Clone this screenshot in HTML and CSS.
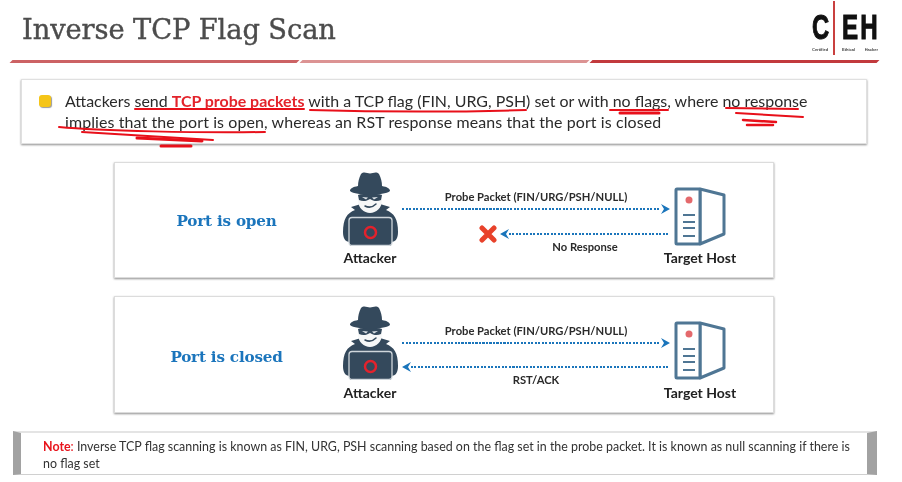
FILE: index.html
```html
<!DOCTYPE html>
<html lang="en">
<head>
<meta charset="utf-8">
<title>Inverse TCP Flag Scan</title>
<link rel="stylesheet" href="styles.css">
</head>
<body>
<svg width="0" height="0" class="defs" aria-hidden="true">
  <symbol id="attacker" viewBox="0 0 55 74">
    <path fill="#34495c" d="M0 60C0 47 4 41 12 38L8 35L18 32H37L47 35L43 38C51 41 55 47 55 60C55 66 53 70 48 70V74H7V70C2 70 0 66 0 60Z"/>
    <path fill="#f6f7f7" d="M15 20H39V28C39 36 33 41 27 41C21 41 15 36 15 28Z"/>
    <path fill="#34495c" d="M15 23C21 21 33 21 39 23L38 28C34 30 30 29 27 27C24 29 20 30 16 28Z"/>
    <path fill="#dfe4e8" d="M19 25L25 25.500L23 27.500ZM35 25L29 25.500L31 27.500Z"/>
    <path fill="none" stroke="#34495c" stroke-width="1.500" stroke-linecap="round" d="M22 34C26 36 30 35 33 32"/>
    <path fill="#34495c" d="M18 2C21 -1 24 1.500 27 1.500C30 1.500 33 -1 36 2C38 6 39 10 39 14C44 15 47 16.500 47 19C41 24 13 24 7 19C7 16.500 10 15 15 14C15 10 16 6 18 2Z"/>
    <rect x="6" y="45.500" width="43" height="28" rx="3" fill="#34495c" stroke="#cfd6db" stroke-width="1.300"/>
    <circle cx="27.500" cy="60.500" r="5.500" fill="none" stroke="#e3222c" stroke-width="2.500"/>
  </symbol>
  <symbol id="host" viewBox="0 0 52 59">
    <path fill="#fff" stroke="#4f7694" stroke-width="3" stroke-linejoin="round" d="M26 2L50 8V47L26 57Z"/>
    <rect x="2" y="2" width="24" height="55" rx="1" fill="#fff" stroke="#4f7694" stroke-width="3"/>
    <circle cx="15" cy="13" r="3.500" fill="#e4696c"/>
    <path stroke="#4f7694" stroke-width="2" d="M9 28H21M9 35H21M9 41H21M9 49H21"/>
  </symbol>
  <symbol id="head-right" viewBox="0 0 9 10">
    <path fill="#1a75bb" d="M0 0L9 5L0 10L3 5Z"/>
  </symbol>
  <symbol id="head-left" viewBox="0 0 9 10">
    <path fill="#1a75bb" d="M9 0L0 5L9 10L6 5Z"/>
  </symbol>
</svg>

<header class="header">
  <h1 class="title">Inverse TCP Flag Scan</h1>
  <div class="logo">
    <span class="logo-c">C</span>
    <span class="logo-eh">EH</span>
    <span class="logo-sub logo-sub-left">Certified</span>
    <span class="logo-sub logo-sub-right"><span>Ethical</span><span>Hacker</span></span>
  </div>
</header>
<div class="rule">
  <span class="rule-seg rule-a"></span>
  <span class="rule-seg rule-b"></span>
  <span class="rule-seg rule-c"></span>
</div>

<section class="callout">
  <span class="bullet"></span>
  <p class="callout-text">Attackers send <strong class="hot">TCP probe packets</strong> with a TCP flag (FIN, URG, PSH) set or with no flags, where no response<br><span class="callout-line-two">implies that the port is open, whereas an RST response means that the port is closed</span></p>
</section>

<section class="panel">
  <h2 class="panel-title">Port is open</h2>
  <div class="actor actor-attacker">
    <svg class="attacker-icon"><use href="#attacker"/></svg>
    <span class="actor-name">Attacker</span>
  </div>
  <div class="flow">
    <span class="flow-label">Probe Packet (FIN/URG/PSH/NULL)</span>
    <div class="arrow">
      <span class="dots"></span>
      <svg class="head"><use href="#head-right"/></svg>
    </div>
    <div class="arrow arrow-back arrow-blocked">
      <svg class="cross" viewBox="0 0 18 18"><path stroke="#e8412a" stroke-width="5" stroke-linecap="round" d="M3 3L15 15M15 3L3 15"/></svg>
      <svg class="head"><use href="#head-left"/></svg>
      <span class="dots"></span>
    </div>
    <span class="flow-label flow-label-low flow-label-shift">No Response</span>
  </div>
  <div class="actor actor-host">
    <svg class="host-icon"><use href="#host"/></svg>
    <span class="actor-name">Target Host</span>
  </div>
</section>

<section class="panel panel-tall">
  <h2 class="panel-title">Port is closed</h2>
  <div class="actor actor-attacker">
    <svg class="attacker-icon"><use href="#attacker"/></svg>
    <span class="actor-name">Attacker</span>
  </div>
  <div class="flow">
    <span class="flow-label">Probe Packet (FIN/URG/PSH/NULL)</span>
    <div class="arrow">
      <span class="dots"></span>
      <svg class="head"><use href="#head-right"/></svg>
    </div>
    <div class="arrow arrow-back">
      <svg class="head"><use href="#head-left"/></svg>
      <span class="dots"></span>
    </div>
    <span class="flow-label flow-label-low">RST/ACK</span>
  </div>
  <div class="actor actor-host">
    <svg class="host-icon"><use href="#host"/></svg>
    <span class="actor-name">Target Host</span>
  </div>
</section>

<section class="note">
  <p class="note-text"><strong class="note-key">Note</strong><span class="note-colon">:</span> Inverse TCP flag scanning is known as FIN, URG, PSH scanning based on the flag set in the probe packet. It is known as null scanning if there is<br>no flag set</p>
</section>

<svg class="scribble" viewBox="0 0 902 482" aria-hidden="true">
  <g fill="none" stroke="#e8101a" stroke-linecap="round">
    <path stroke-width="2" d="M135 109H304M310 110C380 112 460 112 526 110M610 110H668"/>
    <path stroke-width="3" d="M620 113H659"/>
    <path stroke-width="2" d="M726 108L798 109M736 113L803 117"/>
    <path stroke-width="2.500" d="M743 120L776 122M747 125H773"/>
    <path stroke-width="2" d="M59 127C100 131 200 133 265 132M82 132L213 140"/>
    <path stroke-width="3" d="M137 138L202 141M161 146H191"/>
  </g>
</svg>
</body>
</html>
```
FILE: styles.css
```css
html, body {
  margin: 0;
  padding: 0;
}
body {
  position: relative;
  width: 902px;
  height: 482px;
  overflow: hidden;
  background: #fff;
  color: #222;
  font-family: "Lato", "Open Sans", sans-serif;
  filter: blur(0.45px);
}
.defs {
  display: block;
  height: 0;
}
.header {
  display: flex;
  justify-content: space-between;
  align-items: flex-start;
  height: 60px;
  padding: 0 25px 0 22px;
  box-sizing: border-box;
}
.title {
  margin: 13px 0 0;
  font-family: "DejaVu Serif", serif;
  font-weight: 400;
  font-size: 27.300px;
  line-height: 34px;
  letter-spacing: -0.1px;
  -webkit-text-stroke: 0.4px #4c4c4c;
  color: #4c4c4c;
}
.logo {
  display: grid;
  grid-template-columns: 21px 34px;
  grid-template-rows: 38px 8px;
  margin: 8px 0 0 0;
  width: 65px;
  position: relative;
  font-family: "Liberation Sans", sans-serif;
  color: #111;
}
.logo::before {
  content: "";
  position: absolute;
  left: 21px;
  top: -7px;
  width: 2px;
  height: 54px;
  background: #c9403f;
}
.logo-c, .logo-eh {
  font-weight: 700;
  font-size: 35px;
  line-height: 38px;
  transform-origin: left center;
  -webkit-text-stroke: 1px #111;
}
.logo-c {
  transform: scaleX(0.68);
  width: 21px;
}
.logo-eh {
  transform: scaleX(0.69);
  letter-spacing: 3px;
  margin-left: 9px;
  width: 50px;
  white-space: nowrap;
}
.logo-sub {
  font-size: 4px;
  line-height: 8px;
  font-weight: 700;
  color: #444;
  white-space: nowrap;
}
.logo-sub-right {
  display: flex;
  justify-content: space-between;
  margin-left: 9px;
  width: 36px;
}
.rule {
  display: flex;
  gap: 3px;
  height: 3px;
  margin: 0 24px 0 11px;
}
.rule-seg {
  flex: 1;
  transform: skewX(-45deg);
}
.rule-a {
  background: #cc6264;
}
.rule-b {
  background: #dc9393;
}
.rule-c {
  background: #c23a3d;
}
.callout {
  display: flex;
  gap: 14px;
  box-sizing: border-box;
  width: 846px;
  height: 65px;
  margin: 16px 0 0 21px;
  padding: 10px 10px 0 17px;
  border: 1px solid #e0e0e0;
  box-shadow: 0 1px 2px #8f8f8f;
}
.bullet {
  flex: none;
  width: 12px;
  height: 12px;
  margin-top: 5px;
  border-radius: 3px;
  background: #f5c518;
  box-shadow: 1px 1px 1px #9a9a9a;
}
.callout-text {
  margin: 0;
  font-size: 15.940px;
  line-height: 21px;
  white-space: nowrap;
  color: #2a2a2a;
}
.callout-line-two {
  letter-spacing: 0.11px;
}
.hot {
  color: #e3232b;
  font-weight: 700;
}
.panel {
  display: grid;
  grid-template-columns: 223px 64px 268px 60px;
  box-sizing: border-box;
  width: 660px;
  height: 116px;
  margin: 18px 0 0 114px;
  border: 1px solid #dcdcdc;
  box-shadow: 0 1px 2px #8f8f8f;
}
.panel-tall {
  height: 117px;
}
.panel-title {
  margin: 0;
  padding-top: 48px;
  text-align: center;
  font-family: "DejaVu Serif", serif;
  font-weight: 700;
  font-size: 15.200px;
  line-height: 20px;
  letter-spacing: -0.2px;
  color: #1b75bc;
}
.panel-tall .panel-title {
  padding-top: 50px;
}
.actor {
  display: flex;
  flex-direction: column;
  align-items: center;
}
.actor-attacker {
  padding-top: 9px;
}
.actor-host {
  padding-top: 24px;
}
.attacker-icon {
  flex: none;
  width: 55px;
  height: 74px;
}
.host-icon {
  flex: none;
  width: 52px;
  height: 59px;
}
.actor-name {
  margin-top: 2px;
  font-size: 14px;
  font-weight: 700;
  line-height: 20px;
  white-space: nowrap;
  color: #222;
}
.panel-tall .actor-name {
  margin-top: 3px;
}
.flow {
  display: flex;
  flex-direction: column;
  padding-top: 26px;
}
.flow-label {
  text-align: center;
  font-size: 11.200px;
  font-weight: 700;
  line-height: 16px;
  white-space: nowrap;
  color: #2a2a2a;
}
.flow-label-low {
  margin-top: 1px;
}
.flow-label-shift {
  padding-left: 98px;
}
.arrow {
  display: flex;
  align-items: center;
  height: 8px;
}
.arrow-back {
  margin-top: 17px;
}
.panel-tall .arrow-back {
  margin-top: 16px;
}
.arrow-blocked {
  padding-left: 77px;
}
.dots {
  flex: 1;
  height: 2px;
  background: repeating-linear-gradient(90deg, #1a75bb 0 2px, transparent 2px 3.500px);
}
.head {
  flex: none;
  width: 9px;
  height: 10px;
}
.cross {
  flex: none;
  width: 18px;
  height: 18px;
  margin: 0 3px 0 0;
}
.note {
  box-sizing: border-box;
  width: 864px;
  height: 44px;
  margin: 18px 0 0 13px;
  padding: 5px 10px 0 22px;
  border-left: 8px solid #a2a2a2;
  border-right: 10px solid #a2a2a2;
  border-top: 2px solid #e4e4e4;
  border-bottom: 1px solid #d0d0d0;
}
.note-text {
  margin: 0;
  font-size: 12.430px;
  line-height: 17px;
  white-space: nowrap;
  color: #333;
}
.note-key {
  color: #e8141c;
  font-weight: 700;
}
.note-colon {
  color: #e8141c;
}
.scribble {
  position: absolute;
  left: 0;
  top: 0;
  width: 902px;
  height: 482px;
  pointer-events: none;
}
```
